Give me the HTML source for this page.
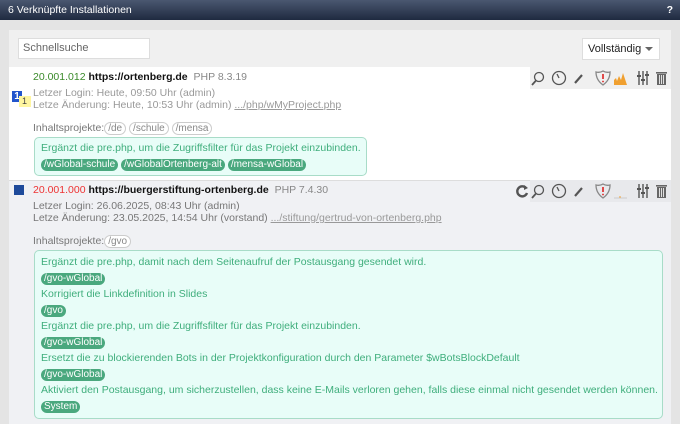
<!DOCTYPE html>
<html><head><style>
*{margin:0;padding:0;box-sizing:border-box}
body{width:680px;height:424px;overflow:hidden;background:#e4e4e4;font-family:"Liberation Sans",sans-serif;font-size:10.5px;position:relative}
.a{position:absolute;white-space:nowrap}
.hdr{left:0;top:0;width:680px;height:20px;background:linear-gradient(#4a5770,#1f2a40);color:#fff;font-size:10.5px;line-height:20px;padding-left:8px}
.g{color:#999}.d{color:#777}
.lk{color:#999;text-decoration:underline}
.tag{display:inline-block;border:1px solid #ccc;border-radius:7px;padding:0 3px;line-height:11px;color:#888;background:#fff;font-size:10px}
.box{background:#e8fdf8;border:1px solid #a8dcc8;border-radius:5px;color:#3fae7c}
.gt{display:inline-block;background:#4aa87e;color:#fff;border-radius:6px;padding:0 3px;line-height:12px;font-size:10px}
.ln{position:absolute;left:6px;white-space:nowrap}
</style></head><body>
<div class="a hdr">6 Verknüpfte Installationen<span style="position:absolute;right:7px;font-weight:bold">?</span></div>
<div class="a" style="left:9px;top:30px;width:662px;height:37px;background:#f0f0f0"></div>
<div class="a" style="left:18px;top:38px;width:132px;height:21px;background:#fff;border:1px solid #ddd;color:#666;line-height:19px;padding-left:4px;font-size:11px">Schnellsuche</div>
<div class="a" style="left:582px;top:38px;width:78px;height:22px;background:#fff;border:1px solid #ddd;color:#222;line-height:20px;padding-left:5px;font-size:11px">Vollständig<span style="position:absolute;right:6px;top:8px;border:4px solid transparent;border-top:4px solid #666;border-bottom:0"></span></div>
<div class="a" style="left:9px;top:67px;width:662px;height:113px;background:#fff"></div>
<div class="a" style="left:9px;top:180px;width:662px;height:244px;background:#f0f1f4;border-top:1px solid #ddd"></div>
<div class="a" style="left:530px;top:67px;width:141px;height:22px;background:#f0f0f0"></div>
<div class="a" style="left:530px;top:180px;width:141px;height:22px;background:#e8e9ec"></div>
<div class="a" style="left:12px;top:91px;width:10px;height:11px;background:#2255cc;color:#fff;font-size:10px;font-weight:bold;text-align:center;line-height:11px">1</div>
<div class="a" style="left:19px;top:96px;width:12px;height:11px;background:#fff6a0;font-size:9px;color:#444;line-height:11px;padding-left:3px">1</div>
<div class="a" style="left:33px;top:71px;font-size:10.5px"><span style="color:#3a8a2a">20.001.012</span> <b style="color:#111">https://ortenberg.de</b> <span style="color:#888">&nbsp;PHP 8.3.19</span></div>
<div class="a g" style="left:33px;top:87px">Letzer Login: Heute, 09:50 Uhr (admin)</div>
<div class="a g" style="left:33px;top:99px">Letze Änderung: Heute, 10:53 Uhr (admin) <span class="lk">.../php/wMyProject.php</span></div>
<div class="a d" style="left:33px;top:122px">Inhaltsprojekte:<span class="tag">/de</span> <span class="tag">/schule</span> <span class="tag">/mensa</span></div>
<div class="a box" style="left:34px;top:137px;width:333px;height:39px">
<div class="ln" style="top:4px">Ergänzt die pre.php, um die Zugriffsfilter für das Projekt einzubinden.</div>
<div class="ln" style="top:20px"><span class="gt">/wGlobal-schule</span> <span class="gt">/wGlobalOrtenberg-alt</span> <span class="gt">/mensa-wGlobal</span></div></div>
<div class="a" style="left:14px;top:185px;width:10px;height:10px;background:#1e4a9a"></div>
<div class="a" style="left:33px;top:184px;font-size:10.5px"><span style="color:#e33">20.001.000</span> <b style="color:#111">https://buergerstiftung-ortenberg.de</b> <span style="color:#888">&nbsp;PHP 7.4.30</span></div>
<div class="a d" style="left:33px;top:200px">Letzer Login: 26.06.2025, 08:43 Uhr (admin)</div>
<div class="a d" style="left:33px;top:212px">Letze Änderung: 23.05.2025, 14:54 Uhr (vorstand) <span class="lk">.../stiftung/gertrud-von-ortenberg.php</span></div>
<div class="a d" style="left:33px;top:235px">Inhaltsprojekte:<span class="tag">/gvo</span></div>
<div class="a box" style="left:34px;top:250px;width:629px;height:169px">
<div class="ln" style="top:5px">Ergänzt die pre.php, damit nach dem Seitenaufruf der Postausgang gesendet wird.</div>
<div class="ln" style="top:21px"><span class="gt">/gvo-wGlobal</span></div>
<div class="ln" style="top:37px">Korrigiert die Linkdefinition in Slides</div>
<div class="ln" style="top:53px"><span class="gt">/gvo</span></div>
<div class="ln" style="top:69px">Ergänzt die pre.php, um die Zugriffsfilter für das Projekt einzubinden.</div>
<div class="ln" style="top:85px"><span class="gt">/gvo-wGlobal</span></div>
<div class="ln" style="top:101px">Ersetzt die zu blockierenden Bots in der Projektkonfiguration durch den Parameter $wBotsBlockDefault</div>
<div class="ln" style="top:117px"><span class="gt">/gvo-wGlobal</span></div>
<div class="ln" style="top:133px">Aktiviert den Postausgang, um sicherzustellen, dass keine E-Mails verloren gehen, falls diese einmal nicht gesendet werden können.</div>
<div class="ln" style="top:149px"><span class="gt">System</span></div></div>
<svg class="a" style="left:530px;top:67px" width="141" height="22" viewBox="0 0 141 22">
<g stroke="#555" fill="none" stroke-width="1.3">
<circle cx="9" cy="10" r="4.5"/><path d="M6 13.5 L2 18" stroke-width="1.8"/>
<circle cx="29" cy="11" r="6.5"/><path d="M29 11 L27 7"/>
<path d="M45 16 L52 8" stroke-width="2.2"/>
<path d="M66 5 Q70 6 73 4 Q76 6 80 5 Q80 13 73 18 Q66 13 66 5Z" stroke="#888"/>
</g>
<path d="M73 7 V12" stroke="#d22" stroke-width="1.6"/><circle cx="73" cy="14.5" r="0.9" fill="#d22"/>
<path d="M84 18 V13 L86 11 L87 14 L89 9 L91 13 L93 6 L95 12 L97 18Z" fill="#f0a030"/>
<g stroke="#555" stroke-width="1.4"><path d="M109 4V18M113 4V18M117 4V18"/><path d="M107 9H111M111 13H115M115 8H119" stroke-width="2"/></g>
<g fill="#666"><rect x="126" y="5" width="11" height="1.6"/><rect x="127" y="7" width="9" height="11"/></g>
<g stroke="#fff" stroke-width="0.8"><path d="M129.5 8V17M131.5 8V17M133.5 8V17"/></g>
</svg>
<svg class="a" style="left:510px;top:180px" width="161" height="22" viewBox="0 0 161 22">
<path d="M16 8 A5 5 0 1 0 17 13" stroke="#555" stroke-width="2.4" fill="none"/><path d="M14 5 L18 8 L14 10Z" fill="#555"/>
<g transform="translate(20,0)">
<g stroke="#555" fill="none" stroke-width="1.3">
<circle cx="9" cy="10" r="4.5"/><path d="M6 13.5 L2 18" stroke-width="1.8"/>
<circle cx="29" cy="11" r="6.5"/><path d="M29 11 L27 7"/>
<path d="M45 16 L52 8" stroke-width="2.2"/>
<path d="M66 5 Q70 6 73 4 Q76 6 80 5 Q80 13 73 18 Q66 13 66 5Z" stroke="#888"/>
</g>
<path d="M73 7 V12" stroke="#d22" stroke-width="1.6"/><circle cx="73" cy="14.5" r="0.9" fill="#d22"/>
<path d="M84 18 H97" stroke="#ccc"/><path d="M90 16 V18" stroke="#f0a030"/>
<g stroke="#555" stroke-width="1.4"><path d="M109 4V18M113 4V18M117 4V18"/><path d="M107 9H111M111 13H115M115 8H119" stroke-width="2"/></g>
<g fill="#666"><rect x="126" y="5" width="11" height="1.6"/><rect x="127" y="7" width="9" height="11"/></g>
<g stroke="#fff" stroke-width="0.8"><path d="M129.5 8V17M131.5 8V17M133.5 8V17"/></g>
</g>
</svg>
</body></html>
